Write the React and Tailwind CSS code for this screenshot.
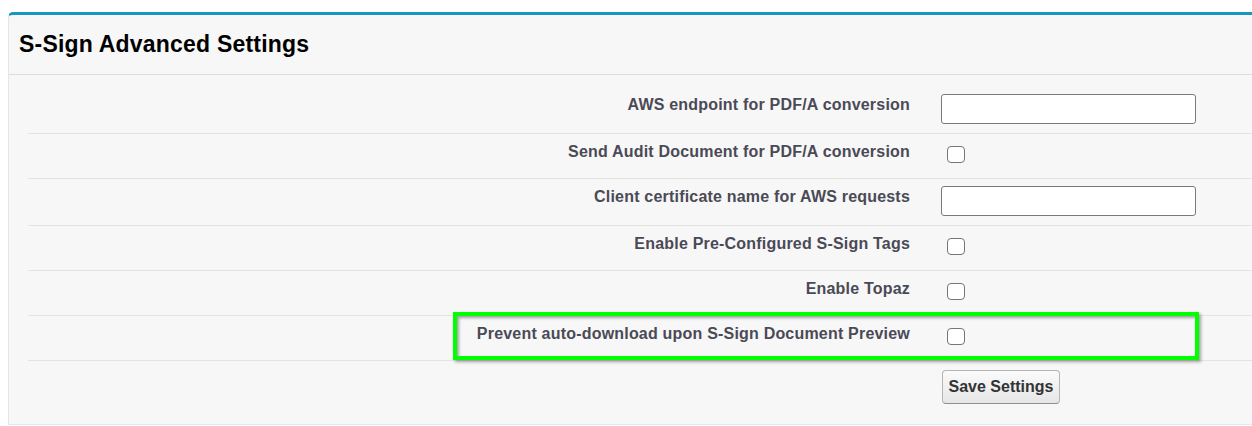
import React from "react";

const font = { fontFamily: '"Liberation Sans", Arial, sans-serif' };

function Label({ children }) {
  return (
    <div className="w-[892px] shrink-0 pr-[10px] pt-[9px] text-right text-[16px] leading-[18px] font-bold tracking-[0.2px] text-[#4a4a56]">
      {children}
    </div>
  );
}

function Row({ label, children, last }) {
  return (
    <div className={"flex " + (last ? "" : "border-b border-[#e3e3e3]")}>
      <Label>{label}</Label>
      <div className="pl-[21px]">{children}</div>
    </div>
  );
}

function TextInput() {
  return (
    <div className="mt-[7px] mb-[9px] h-[30px] w-[255px] rounded-[3px] border border-[#7a7a7a] bg-white" />
  );
}

function Checkbox() {
  return (
    <div className="mt-[12px] mb-[15px] ml-[6px] h-[17px] w-[18px] rounded-[4px] border-[1.5px] border-[#767676] bg-white" />
  );
}

export default function App() {
  return (
    <div className="relative h-[426px] w-[1252px] overflow-hidden bg-white" style={font}>
      <div className="ml-[8px] mt-[12px] h-[413px] rounded-tl-[5px] border-t-[3px] border-l border-b border-t-[#1797c0] border-l-[#e6e6e6] border-b-[#e6e6e6] bg-[#f7f7f7]">
        <div className="h-[60px] border-b border-[#dcdcdc] pl-[10px] pt-[16px]">
          <h2 className="text-[23px] leading-[26px] font-bold tracking-[0.2px] text-black">S-Sign Advanced Settings</h2>
        </div>
        <div className="pl-[19px] pt-[12px]">
          <Row label="AWS endpoint for PDF/A conversion">
            <TextInput />
          </Row>
          <Row label="Send Audit Document for PDF/A conversion">
            <Checkbox />
          </Row>
          <Row label="Client certificate name for AWS requests">
            <TextInput />
          </Row>
          <Row label="Enable Pre-Configured S-Sign Tags">
            <Checkbox />
          </Row>
          <Row label="Enable Topaz">
            <Checkbox />
          </Row>
          <Row label="Prevent auto-download upon S-Sign Document Preview">
            <Checkbox />
          </Row>
          <div className="flex">
            <div className="w-[892px] shrink-0" />
            <div className="pl-[22px] pt-[9px]">
              <button className="h-[34px] w-[118px] rounded-[4px] border border-[#b5b5b5] border-b-[#8f8f8f] bg-gradient-to-b from-[#fbfbfb] to-[#e6e6e6] text-[16px] font-bold text-[#333]">
                Save Settings
              </button>
            </div>
          </div>
        </div>
      </div>
      <div className="pointer-events-none absolute left-[453px] top-[312px] h-[48px] w-[746px] border-[4px] border-[#00ff00] shadow-[2px_2px_3px_rgba(0,0,0,0.35),inset_2px_2px_3px_rgba(0,0,0,0.35)]" />
    </div>
  );
}
